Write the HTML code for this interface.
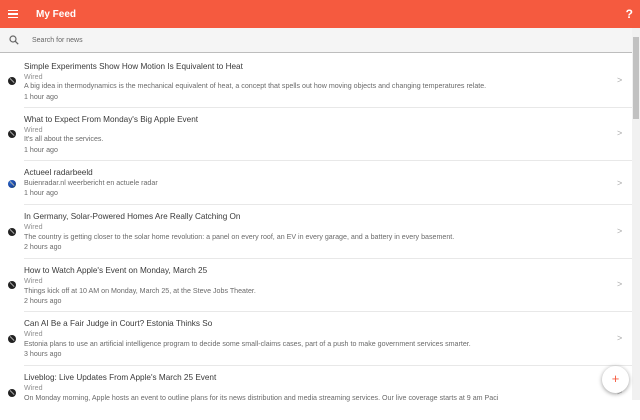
<!DOCTYPE html>
<html><head><meta charset="utf-8"><style>
*{margin:0;padding:0;box-sizing:border-box}
body{width:640px;height:400px;overflow:hidden;background:#fff;font-family:"Liberation Sans",sans-serif;position:relative}
.hdr{position:absolute;left:0;top:0;width:640px;height:28px;background:#f55a3f;color:#fff}
.hdr .t{position:absolute;left:36px;top:9px;font-size:10px;font-weight:bold}
.hdr .q{position:absolute;right:7px;top:7px;font-size:12px;font-weight:bold}
.menu{position:absolute;left:8px;top:10px;width:10px;height:8px;border-top:1.6px solid #fff;border-bottom:1.6px solid #fff}
.menu:after{content:"";position:absolute;left:0;top:2px;width:10px;height:1.6px;background:#fff}
.search{position:absolute;left:0;top:28px;width:632px;height:25px;background:#f5f5f5;border-bottom:1.5px solid #bdbdbd}
.search span{position:absolute;left:32px;top:9px;font-size:7px;color:#666}
.sb{position:absolute;left:632px;top:28px;width:8px;height:372px;background:#f1f1f1}
.th{position:absolute;left:633px;top:37px;width:6px;height:82px;background:#c1c1c1}
.item{position:absolute;left:0;width:632px}
.item .sep{position:absolute;left:24px;right:0;bottom:0;height:1px;background:#e8e8e8}
.tt{position:absolute;left:24px;font-size:8.2px;color:#3a3a3a}
.l{position:absolute;left:24px;font-size:7.1px;color:#6a6a6a;white-space:nowrap}
.src{color:#8f8f8f}
.ic{position:absolute;left:8px;width:8px;height:8px;border-radius:50%;background:#222}
.ic:after{content:"";position:absolute;left:1px;top:3.4px;width:6px;height:1.2px;background:#aaa;transform:rotate(45deg)}
.chev{position:absolute;left:617px;font-size:9px;color:#aaa}
.fab{position:absolute;left:602px;top:366px;width:27px;height:27px;border-radius:50%;background:#fff;box-shadow:0 1px 4px rgba(0,0,0,.4);color:#f55a3f;font-size:13px;text-align:center;line-height:26px}
</style></head><body>
<div class="hdr"><div class="menu"></div><div class="t">My Feed</div><div class="q">?</div></div>
<div class="search">
<svg style="position:absolute;left:9px;top:7px" width="10" height="10" viewBox="0 0 10 10"><circle cx="4" cy="4" r="3" fill="none" stroke="#666" stroke-width="1.2"/><line x1="6.2" y1="6.2" x2="9.2" y2="9.2" stroke="#666" stroke-width="1.3"/></svg>
<span>Search for news</span></div>
<div class="sb"></div><div class="th"></div>

<div class="item" style="top:54px;height:54px"><div class="tt" style="top:8px">Simple Experiments Show How Motion Is Equivalent to Heat</div><div class="l src" style="top:19px">Wired</div><div class="l" style="top:28px">A big idea in thermodynamics is the mechanical equivalent of heat, a concept that spells out how moving objects and changing temperatures relate.</div><div class="l" style="top:39px">1 hour ago</div><div class="ic" style="top:23px"></div><div class="chev" style="top:21px">&gt;</div><div class="sep"></div></div>

<div class="item" style="top:108px;height:53px"><div class="tt" style="top:7px">What to Expect From Monday's Big Apple Event</div><div class="l src" style="top:18px">Wired</div><div class="l" style="top:27px">It's all about the services.</div><div class="l" style="top:38px">1 hour ago</div><div class="ic" style="top:22px"></div><div class="chev" style="top:20px">&gt;</div><div class="sep"></div></div>

<div class="item" style="top:161px;height:44px"><div class="tt" style="top:7px">Actueel radarbeeld</div><div class="l" style="top:18px">Buienradar.nl weerbericht en actuele radar</div><div class="l" style="top:28px">1 hour ago</div><div class="ic" style="top:19px;background:radial-gradient(circle at 35% 35%,#2a6fd0,#1a3f9a 60%,#2c8a2c)"></div><div class="chev" style="top:17px">&gt;</div><div class="sep"></div></div>

<div class="item" style="top:205px;height:54px"><div class="tt" style="top:7px">In Germany, Solar-Powered Homes Are Really Catching On</div><div class="l src" style="top:18px">Wired</div><div class="l" style="top:28px">The country is getting closer to the solar home revolution: a panel on every roof, an EV in every garage, and a battery in every basement.</div><div class="l" style="top:38px">2 hours ago</div><div class="ic" style="top:23px"></div><div class="chev" style="top:21px">&gt;</div><div class="sep"></div></div>

<div class="item" style="top:259px;height:53px"><div class="tt" style="top:7px">How to Watch Apple's Event on Monday, March 25</div><div class="l src" style="top:18px">Wired</div><div class="l" style="top:28px">Things kick off at 10 AM on Monday, March 25, at the Steve Jobs Theater.</div><div class="l" style="top:38px">2 hours ago</div><div class="ic" style="top:22px"></div><div class="chev" style="top:20px">&gt;</div><div class="sep"></div></div>

<div class="item" style="top:312px;height:54px"><div class="tt" style="top:7px">Can AI Be a Fair Judge in Court? Estonia Thinks So</div><div class="l src" style="top:18px">Wired</div><div class="l" style="top:28px">Estonia plans to use an artificial intelligence program to decide some small-claims cases, part of a push to make government services smarter.</div><div class="l" style="top:38px">3 hours ago</div><div class="ic" style="top:23px"></div><div class="chev" style="top:21px">&gt;</div><div class="sep"></div></div>

<div class="item" style="top:366px;height:54px"><div class="tt" style="top:7px">Liveblog: Live Updates From Apple's March 25 Event</div><div class="l src" style="top:18px">Wired</div><div class="l" style="top:28px">On Monday morning, Apple hosts an event to outline plans for its news distribution and media streaming services. Our live coverage starts at 9 am Paci</div><div class="ic" style="top:23px"></div><div class="chev" style="top:21px">&gt;</div></div>

<div class="fab">+</div>
</body></html>
